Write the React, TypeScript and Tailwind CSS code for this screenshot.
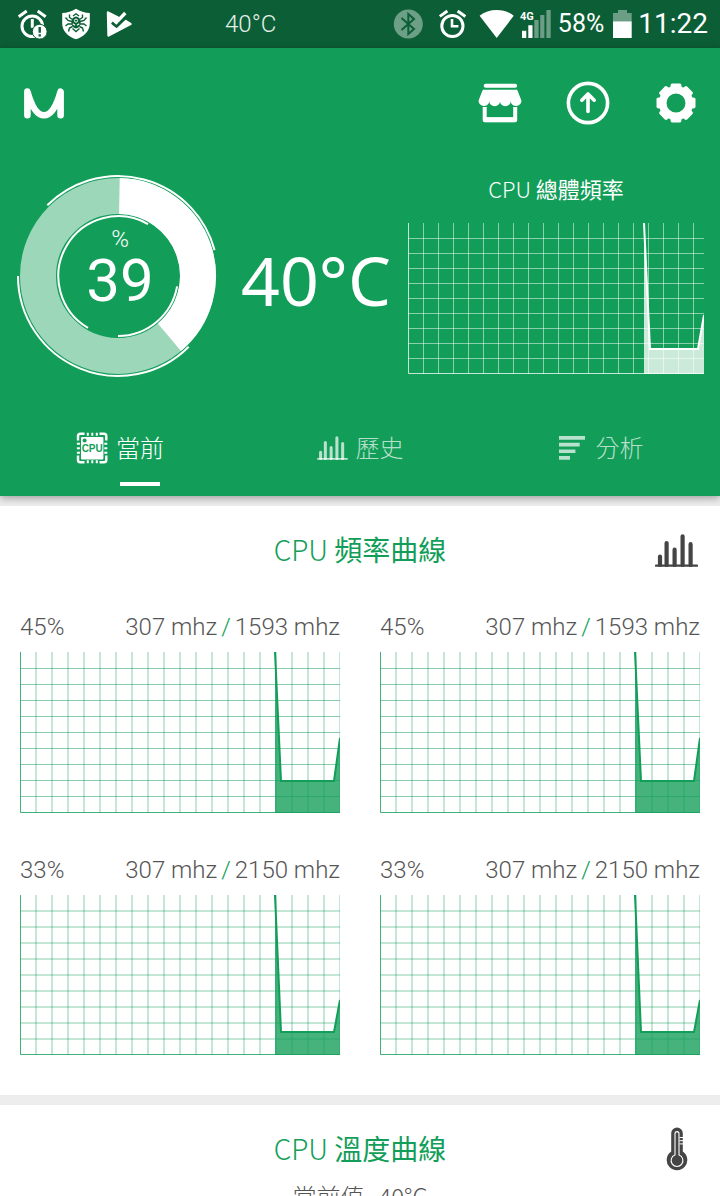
import type { ReactNode } from "react";

type CoreType = {
  id: string;
  load: string;
  min: string;
  max: string;
  points: string;
  height: number;
  shift: number;
};

const CORES: CoreType[] = [
  { id: "cpu0", load: "45%", min: "307 mhz", max: "1593 mhz", points: "255,0 261,129 314,129 320,86", height: 161, shift: 0.5 },
  { id: "cpu1", load: "45%", min: "307 mhz", max: "1593 mhz", points: "255,0 261,129 314,129 320,86", height: 161, shift: 0.5 },
  { id: "cpu2", load: "33%", min: "307 mhz", max: "2150 mhz", points: "255,0 261,137 314,137 320,105", height: 160, shift: 0 },
  { id: "cpu3", load: "33%", min: "307 mhz", max: "2150 mhz", points: "255,0 261,137 314,137 320,105", height: 160, shift: 0 },
];

function range(from: number, to: number, step: number) {
  const out: number[] = [];
  for (let v = from; v < to; v += step) out.push(v);
  return out;
}

/* ---------- charts ---------- */

function CoreChart({ core }: { core: CoreType }) {
  const h = core.height;
  return (
    <svg
      viewBox={`0 0 320 ${h}`}
      preserveAspectRatio="none"
      className="block w-full text-[#129e59]"
      height={h}
      stroke="currentColor"
      fill="none"
    >
      <g strokeOpacity="0.5">
        {range(16, 321, 16).map((x) => (
          <path key={x} d={`M${x} 0V${h}`} />
        ))}
        {range(16, 150, 16).map((y) => (
          <path key={y} d={`M0 ${y + core.shift}H320`} />
        ))}
      </g>
      <path d={`M0.5 0V${h - 0.5}H320`} strokeOpacity="0.8" />
      <polygon points={`255,${h} ${core.points} 320,${h}`} fill="currentColor" fillOpacity="0.78" stroke="none" />
      <polyline points={core.points} strokeWidth="2" />
    </svg>
  );
}

function TotalChart() {
  const points = "236,0 242,126 290,126 296,92";
  return (
    <svg
      viewBox="0 0 296 151"
      preserveAspectRatio="none"
      className="block w-full text-white"
      height={151}
      stroke="currentColor"
      fill="none"
    >
      <g strokeOpacity="0.5">
        {range(15, 296, 15).map((x) => (
          <path key={x} d={`M${x + 0.5} 0V151`} />
        ))}
        {range(15, 150, 15).map((y) => (
          <path key={y} d={`M0 ${y + 0.5}H296`} />
        ))}
      </g>
      <path d="M0.5 0V150.5H296" strokeOpacity="0.75" />
      <polygon points={`236,151 ${points} 296,151`} fill="currentColor" fillOpacity="0.78" stroke="none" />
      <polyline points={points} strokeWidth="2" />
    </svg>
  );
}

function polar(r: number, deg: number) {
  const a = ((deg - 90) * Math.PI) / 180;
  return `${(102 + r * Math.cos(a)).toFixed(2)} ${(102 + r * Math.sin(a)).toFixed(2)}`;
}

function arc(r: number, from: number, to: number) {
  const large = to - from > 180 ? 1 : 0;
  return `M${polar(r, from)}A${r} ${r} 0 ${large} 1 ${polar(r, to)}`;
}

function LoadRing() {
  return (
    <div className="relative size-[204px] shrink-0">
      <svg viewBox="0 0 204 204" className="size-full" fill="none" stroke="#fff">
        <circle cx="102" cy="102" r="80" strokeWidth="36" strokeOpacity="0.59" />
        <path d={arc(80, 1, 140)} strokeWidth="36" />
        <g strokeWidth="2">
          <path d={arc(100, -45, 75)} />
          <path d={arc(100, 135, 270)} />
          <path d={arc(60, 210, 390)} />
          <path d={arc(60, 100, 180)} />
        </g>
      </svg>
      <div className="absolute inset-0 flex flex-col items-center pl-1 pt-[51px] font-[Roboto] text-white">
        <span className="text-2xl font-light leading-7">%</span>
        <span className="text-[60px] leading-[56px]">39</span>
      </div>
    </div>
  );
}

/* ---------- icons ---------- */

function MissedAlarmIcon() {
  return (
    <svg viewBox="0 0 32 32" className="size-8" fill="none" stroke="#fff" strokeWidth="3">
      <path d="M2.7 8.7L10.7 3M21.7 3L29.7 8.7" />
      <circle cx="16.3" cy="18.3" r="10.3" />
      <path d="M16.3 11V19.8" />
      <circle cx="23.7" cy="23.7" r="7.4" fill="#fff" stroke="#0b5e35" strokeWidth="1" />
      <path d="M23.7 19V24.8M23.7 26.3V28.6" stroke="#0b5e35" strokeWidth="2.4" />
    </svg>
  );
}

function ShieldIcon() {
  return (
    <svg viewBox="0 0 32 32" className="size-8" fill="none" stroke="#0b5e35" strokeWidth="1.4">
      <path d="M16 .7C12 3.4 7 4.8 2.2 5V16C2.5 23 8 28.7 16 31.3C24 28.7 29.5 23 29.8 16V5C25 4.8 20 3.4 16 .7Z" fill="#fff" stroke="none" />
      <path d="M12.5 11.5L9.5 9.5V6.5M12 13.5L8 12.5L5.5 9.5M12 16H8L5.5 18M12.5 18.5L9.5 20L8.5 23.5M19.5 11.5L22.5 9.5V6.5M20 13.5L24 12.5L26.5 9.5M20 16H24L26.5 18M19.5 18.5L22.5 20L23.5 23.5" />
      <ellipse cx="16" cy="14.5" rx="4.6" ry="6" fill="#0b5e35" stroke="none" />
      <path d="M13 8L16 5.8L19 8M12.5 20.5L16 23.5L19.5 20.5" />
      <circle cx="16" cy="12.6" r="1.6" stroke="#fff" strokeWidth="1" />
      <path d="M12.8 15.8L15 17.3M19.2 15.8L17 17.3" stroke="#fff" strokeWidth="1.2" />
    </svg>
  );
}

function PlayCheckIcon() {
  return (
    <svg viewBox="0 0 32 32" className="size-8" fill="none">
      <path d="M4 4.5L14 9.5L20 12L26.5 16L4.5 27.5Z" fill="#fff" stroke="#fff" strokeWidth="2.4" strokeLinejoin="round" />
      <path d="M8 14.5L12.5 18L24 7" stroke="#0b5e35" strokeWidth="3.4" />
      <path d="M10 12.2L12.3 14.4L21.3 5" stroke="#fff" strokeWidth="3.4" />
    </svg>
  );
}

function BluetoothIcon() {
  return (
    <svg viewBox="0 0 32 32" className="mr-2 size-8" fill="none">
      <circle cx="16.3" cy="16" r="14.5" fill="#6d9f86" />
      <path d="M9.5 10L22 21L16.3 26V6L22 11L9.5 22" stroke="#0b5e35" strokeWidth="2" />
    </svg>
  );
}

function AlarmIcon() {
  return (
    <svg viewBox="0 0 32 32" className="size-8" fill="none" stroke="#fff" strokeWidth="3">
      <path d="M1.8 8.4L9.4 3M19.6 3L27.4 8.4" />
      <circle cx="14.4" cy="18" r="10.6" />
      <path d="M14 11V18.2H20.4" strokeWidth="2.6" />
    </svg>
  );
}

function WifiIcon() {
  return (
    <svg viewBox="0 0 38 32" className="h-8 w-[38px]" fill="#fff">
      <path d="M3.6 7.8C12.5 .2 28.8 .2 37.7 7.8L20.7 30Z" />
    </svg>
  );
}

function SignalIcon() {
  return (
    <svg viewBox="0 0 32 32" className="size-8" fill="#fff">
      <text x="0" y="11.5" className="font-[Roboto] text-[11px] font-bold">4G</text>
      <path d="M2 22.7H6.3V30H2ZM8.3 17.3H12.5V30H8.3Z" />
      <path d="M14.3 12H18.6V30H14.3ZM20.2 7H24.4V30H20.2ZM26.4 2H30.7V30H26.4Z" fillOpacity="0.4" />
    </svg>
  );
}

function BatteryIcon() {
  return (
    <svg viewBox="0 0 22 32" className="h-8 w-[22px]" fill="#fff">
      <path d="M8 2H17V5H21.7V13.3H3V5H8Z" fillOpacity="0.4" />
      <path d="M3 13.3H21.7V30H3Z" />
    </svg>
  );
}

function LogoIcon() {
  return (
    <svg viewBox="0 0 40 31" className="h-[31px] w-10" fill="none" stroke="#fff" strokeWidth="6.6" strokeLinecap="round" strokeLinejoin="round">
      <path d="M3.4 27.3V3.6C7.5 18 13 27.3 20 27.3S32.5 18 36.6 3.6V27.3" />
    </svg>
  );
}

function StoreIcon() {
  return (
    <svg viewBox="0 0 44 44" className="size-11" fill="#fff">
      <rect x="5.7" y="2.8" width="33.4" height="3.9" rx="1.9" />
      <path d="M4.8 8.7H39.2L43.4 19.4A5.35 5 0 0 1 32.7 20.6A5.35 4.6 0 0 1 22 20.6A5.35 4.6 0 0 1 11.3 20.6A5.35 5 0 0 1 .6 19.4Z" />
      <path d="M6.7 26V39.2H37.2V26" fill="none" stroke="#fff" strokeWidth="4" strokeLinejoin="round" />
      <path d="M7 38.6H37" stroke="#fff" strokeWidth="5" />
    </svg>
  );
}

function UpdateIcon() {
  return (
    <svg viewBox="0 0 44 44" className="size-11" fill="none" stroke="#fff" strokeWidth="3.6" strokeLinecap="round" strokeLinejoin="round">
      <circle cx="22" cy="22" r="19.6" />
      <path d="M22 30.5V13.5M15.8 19.2L22 13L28.2 19.2" />
    </svg>
  );
}

function GearIcon() {
  return (
    <svg viewBox="0 0 44 44" className="size-11" fill="#fff">
      <circle cx="22" cy="22" r="13.3" fill="none" stroke="#fff" strokeWidth="7.6" />
      {range(0, 360, 45).map((a) => (
        <path key={a} d="M16 8L16.8 3.6Q17.2 2.5 18.2 2.5H25.8Q26.8 2.5 27.2 3.6L28 8Z" transform={`rotate(${a} 22 22)`} />
      ))}
    </svg>
  );
}

function ChipIcon() {
  return (
    <svg viewBox="0 0 32 32" className="size-8" fill="none" stroke="#fff" strokeWidth="2">
      <path d="M2 8.5V4Q2 1.7 4.3 1.7H8.5M23.5 1.7H28Q30.3 1.7 30.3 4V8.5M30.3 23.5V28Q30.3 30.3 28 30.3H23.5M8.5 30.3H4.3Q2 30.3 2 28V23.5" strokeWidth="2.4" />
      <path d="M10.8 2.2H22M10.8 29.8H22M2.4 10.8V22M29.8 10.8V22" strokeWidth="3" strokeDasharray="2 2.5" />
      <rect x="5" y="5" width="22.4" height="22.4" rx="1" fill="#fff" stroke="none" />
      <circle cx="8.6" cy="8.6" r="2" fill="#129e59" stroke="none" />
      <text x="16.2" y="20" textAnchor="middle" fill="#129e59" stroke="none" className="font-[Arimo,'Liberation_Sans'] text-[10px] font-bold">
        CPU
      </text>
    </svg>
  );
}

function BarsIcon({ className }: { className: string }) {
  return (
    <svg viewBox="0 0 43 33" className={className} fill="none" stroke="currentColor">
      <path d="M5 31V22.5M11.6 31V9M19.6 31V15.7M27.6 31V2.3M35.6 31V10.2" strokeWidth="4.2" strokeLinecap="round" />
      <path d="M1 31.6H42" strokeWidth="2.2" strokeLinecap="round" />
    </svg>
  );
}

function LinesIcon() {
  return (
    <svg viewBox="-2 0 31 24" className="h-6 w-[31px]" fill="currentColor">
      <path d="M0 0H26V3.7H0ZM0 6.8H20.7V10.4H0ZM0 13.4H16.4V17H0ZM0 20H11V23.7H0Z" />
    </svg>
  );
}

function ThermometerIcon() {
  return (
    <svg viewBox="0 0 22 44" className="h-11 w-[22px]" fill="#454545">
      <path d="M5.2 6.3A5.8 5.8 0 0 1 16.8 6.3V24.5A10.3 10.3 0 1 1 5.2 24.5Z" />
      <path d="M9 28V6.8Q9 4.6 11 4.6T13 6.8V28A5.9 5.9 0 1 1 9 28Z" fill="none" stroke="#fff" strokeWidth="1.1" />
      <circle cx="11" cy="33.2" r="4.8" />
      <path d="M13.5 10.5H17M13.5 13.7H17M13.5 16.9H17" stroke="#fff" strokeWidth="1" />
    </svg>
  );
}

/* ---------- page parts ---------- */

function StatusBar() {
  return (
    <div className="flex h-12 items-center bg-[#0b5e35] pl-4 pr-3 font-[Roboto] text-white">
      <div className="flex items-center gap-3">
        <MissedAlarmIcon />
        <ShieldIcon />
        <PlayCheckIcon />
      </div>
      <span className="ml-[89px] flex-1 text-2xl font-light text-white/90">40°C</span>
      <div className="flex items-center gap-1.5">
        <BluetoothIcon />
        <AlarmIcon />
        <WifiIcon />
        <SignalIcon />
        <span className="text-[25px] leading-8">58%</span>
        <BatteryIcon />
        <span className="text-[28px] leading-8">11:22</span>
      </div>
    </div>
  );
}

function Tab({ label, icon, active = false }: { label: string; icon: ReactNode; active?: boolean }) {
  return (
    <button
      type="button"
      role="tab"
      aria-selected={active}
      className={`relative flex h-24 items-center justify-center gap-2 text-2xl font-light ${active ? "text-white" : "text-white/70"}`}
    >
      {icon}
      <span className="pb-0.5">{label}</span>
      {active && <span className="absolute bottom-2.5 left-1/2 h-1 w-10 bg-white" />}
    </button>
  );
}

function Card({ title, icon, children }: { title: string; icon: ReactNode; children: ReactNode }) {
  return (
    <section className="relative bg-white px-5 pt-[23px]">
      <h2 className="mb-0.5 text-center text-[28px] leading-10 text-[#129e59]">
        <span className="font-light">CPU</span> {title}
      </h2>
      <div className="absolute right-[22px] top-[22px] flex h-11 w-[43px] items-center justify-center">{icon}</div>
      {children}
    </section>
  );
}

export default function App() {
  return (
    <div className="h-screen overflow-hidden bg-[#ededed] font-['Noto_Sans_CJK_TC',sans-serif]">
      <StatusBar />

      <header className="relative bg-[#129e59] shadow-[0_2px_8px_rgba(0,0,0,0.35)]">
        <div className="flex h-[110px] items-center justify-between pl-6 pr-[22px]">
          <LogoIcon />
          <nav className="flex gap-11">
            <button type="button" aria-label="Store"><StoreIcon /></button>
            <button type="button" aria-label="Update"><UpdateIcon /></button>
            <button type="button" aria-label="Settings"><GearIcon /></button>
          </nav>
        </div>

        <div className="flex px-4 pt-4">
          <LoadRing />
          <div className="flex w-[188px] shrink-0 items-center justify-center pl-1 pt-2 font-['Noto_Sans'] text-[68px] text-white">
            40°C
          </div>
          <div className="min-w-0 flex-1">
            <h1 className="mb-[21px] text-center text-[22px] leading-7 text-white">
              <span className="font-light">CPU</span> 總體頻率
            </h1>
            <TotalChart />
          </div>
        </div>

        <div role="tablist" className="mt-[22px] grid grid-cols-3">
          <Tab label="當前" icon={<ChipIcon />} active />
          <Tab label="歷史" icon={<BarsIcon className="h-6 w-[31px]" />} />
          <Tab label="分析" icon={<LinesIcon />} />
        </div>
      </header>

      <main className="flex flex-col gap-2.5 pt-2.5">
        <Card title="頻率曲線" icon={<BarsIcon className="h-[33px] w-[43px] text-[#454545]" />}>
          <div className="grid grid-cols-2 gap-x-10 gap-y-[41px] pb-10 pt-10">
            {CORES.map((core) => (
              <div key={core.id}>
                <div className="mb-[9px] flex justify-between font-[Roboto] text-2xl font-light leading-8 text-[#555]">
                  <span>{core.load}</span>
                  <span className="flex gap-1">
                    {core.min}
                    <span className="text-[#129e59]">/</span>
                    {core.max}
                  </span>
                </div>
                <CoreChart core={core} />
              </div>
            ))}
          </div>
        </Card>

        <Card title="溫度曲線" icon={<ThermometerIcon />}>
          <p className="flex justify-center gap-3.5 pb-6 pt-2.5 text-2xl font-light leading-8 text-[#555]">
            <span>當前值</span>
            <span>40°C</span>
          </p>
        </Card>
      </main>
    </div>
  );
}
